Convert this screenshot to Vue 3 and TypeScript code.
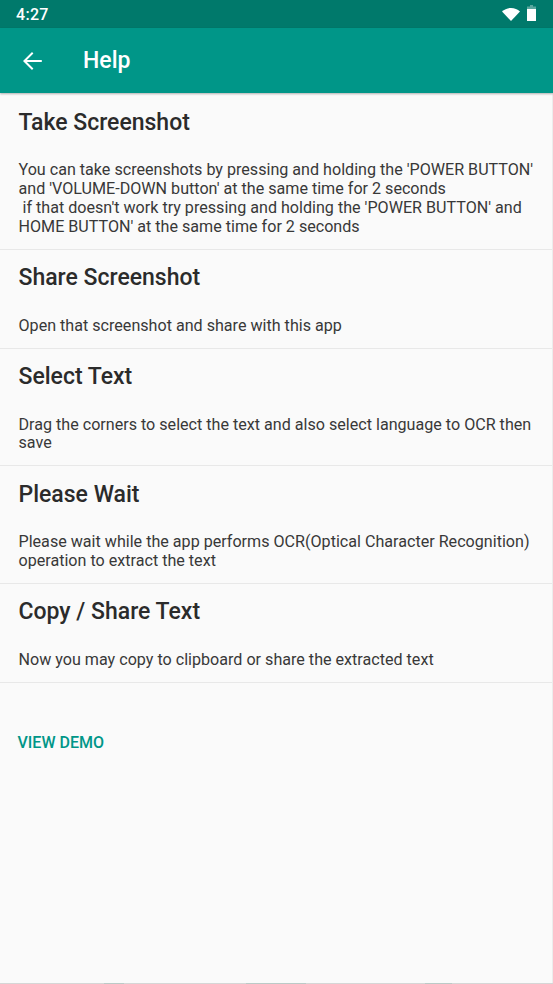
<script setup lang="ts">
interface Step { title: string; lines: string[] }
const steps: Step[] = [
  { title: 'Take Screenshot', lines: ["You can take screenshots by pressing and holding the 'POWER BUTTON'", "and 'VOLUME-DOWN button' at the same time for 2 seconds", "\u00a0if that doesn't work try pressing and holding the 'POWER BUTTON' and", "HOME BUTTON' at the same time for 2 seconds"] },
  { title: 'Share Screenshot', lines: ['Open that screenshot and share with this app'] },
  { title: 'Select Text', lines: ['Drag the corners to select the text and also select language to OCR then', 'save'] },
  { title: 'Please Wait', lines: ['Please wait while the app performs OCR(Optical Character Recognition)', 'operation to extract the text'] },
  { title: 'Copy / Share Text', lines: ['Now you may copy to clipboard or share the extracted text'] },
]
</script>

<template>
  <div class="screen">
    <div class="status">
      <span class="time">4:27</span>
      <div class="status-icons">
        <svg class="wifi" width="18" height="13" viewBox="0 0 18 13"><path d="M0 3.6C2.4 1.4 5.5 0 9 0s6.6 1.4 9 3.6L9 13z" fill="#fff" /></svg>
        <svg class="battery" width="9" height="16" viewBox="0 0 9 16">
          <path d="M3 0h3v1.5h3V16H0V1.5h3z" fill="#fff" fill-opacity="0.35" />
          <path d="M0 4h9v12H0z" fill="#fff" />
        </svg>
      </div>
    </div>
    <header class="appbar">
      <svg class="back" width="20" height="20" viewBox="0 0 20 20"><path d="M19.8 9H4.9l6.5-6.5L10 1 1 10l9 9 1.4-1.4L4.9 11h14.9z" fill="#fff" /></svg>
      <h1 class="title">Help</h1>
    </header>
    <main class="content">
      <section v-for="step in steps" :key="step.title" class="step">
        <h2 class="step-title">{{ step.title }}</h2>
        <p class="step-body"><span v-for="line in step.lines" :key="line" class="line">{{ line }}</span></p>
      </section>
      <button class="demo" type="button">VIEW DEMO</button>
    </main>
    <div class="navline">
      <i class="seg seg1"></i><i class="seg seg2"></i><i class="seg seg3"></i>
    </div>
  </div>
</template>

<style>
html, body { margin: 0; padding: 0; background: #fafafa; }
</style>

<style scoped>
.screen {
  width: 553px;
  height: 984px;
  display: flex;
  flex-direction: column;
  background: #fafafa;
  font-family: Roboto, "Liberation Sans", sans-serif;
  overflow: hidden;
  position: relative;
}
.status {
  height: 28px;
  flex: none;
  background: #00796b;
  display: flex;
  align-items: center;
  justify-content: space-between;
  padding: 0 17px 0 16px;
  color: #fff;
}
.time { font-size: 16px; font-weight: 500; letter-spacing: 0.3px; }
.status-icons { display: flex; align-items: flex-end; gap: 7px; margin-top: -2px; }
.wifi, .battery { display: block; }
.appbar {
  height: 65px;
  flex: none;
  background: #009688;
  display: flex;
  align-items: center;
  padding: 0 0 0 22px;
  box-shadow: 0 1px 2px rgba(0, 0, 0, 0.3);
  position: relative;
  z-index: 1;
}
.title { margin: 0 0 0 41px; color: #fff; font-size: 23px; font-weight: 500; }
.content {
  flex: 1;
  display: flex;
  flex-direction: column;
  align-items: flex-start;
  padding-top: 1.4px;
  border-right: 1px solid #ececec;
}
.step {
  width: 100%;
  box-sizing: border-box;
  padding: 13.4px 18.5px 12.25px;
  border-bottom: 1px solid #e8e8e8;
}
.step-title {
  margin: 0;
  font-size: 23px;
  line-height: 30px;
  font-weight: 500;
  color: #2b2b2b;
}
.step-body {
  margin: 23.6px 0 0;
  font-size: 16.13px;
  line-height: 18.75px;
  color: #383838;
}
.line { display: block; white-space: pre; }
.demo {
  margin: 50px 0 0 17.5px;
  padding: 0;
  border: 0;
  background: none;
  font: 500 16px Roboto, sans-serif;
  color: #009688;
}
.navline {
  position: absolute;
  left: 0; right: 0; bottom: 0;
  height: 1px;
  background: #d6d6d6;
}
.seg { position: absolute; top: 0; height: 1px; background: #bccac7; }
.seg1 { left: 104px; width: 20px; }
.seg2 { left: 246px; width: 60px; }
.seg3 { left: 425px; width: 27px; }
</style>
